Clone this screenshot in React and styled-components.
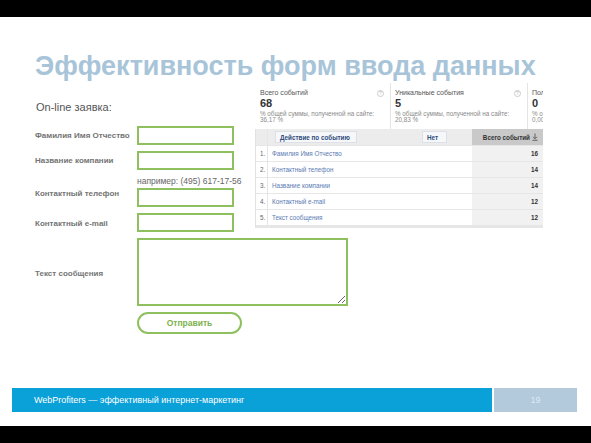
import React from "react";
import styled, { createGlobalStyle } from "styled-components";

const Global = createGlobalStyle`
  html, body { margin: 0; padding: 0; background: #000; }
  body { width: 591px; height: 443px; overflow: hidden; }
  * { box-sizing: border-box; }
`;

const Slide = styled.div`
  margin-top: 17px;
  height: 409px;
  background: #fff;
  display: flex;
  flex-direction: column;
`;

const Title = styled.h1`
  margin: 0;
  padding: 35px 0 0 35px;
  font: bold 27px/28px "Liberation Sans", Arial, sans-serif;
  color: #a8c4d8;
  white-space: nowrap;
`;

const Body = styled.div`
  display: flex;
  align-items: flex-start;
  margin-top: 3px;
  padding-left: 35px;
`;

const FormColumn = styled.div`
  width: 219px;
  flex: none;
`;

const FormHeading = styled.div`
  margin: 17px 0 12px 1px;
  font: 11px/14px "Liberation Sans", Arial, sans-serif;
  color: #555;
`;

const FormGrid = styled.div`
  display: grid;
  grid-template-columns: 102px 97px;
  row-gap: 6px;
  align-items: center;
`;

const Label = styled.div`
  font: bold 8px/10px "Liberation Sans", Arial, sans-serif;
  color: #747474;
  white-space: nowrap;
  margin-top: ${(p) => p.$shift || 0}px;
`;

const FieldStack = styled.div`
  display: flex;
  flex-direction: column;
  gap: 2px;
`;

const Hint = styled.div`
  font: 8.5px/10px "Liberation Sans", Arial, sans-serif;
  color: #666;
  white-space: nowrap;
`;

const Input = styled.input`
  display: block;
  width: 97px;
  height: 19px;
  margin: 0;
  border: 2px solid #8fc060;
  background: #fff;
  outline: none;
`;

const TextArea = styled.textarea`
  display: block;
  width: 211px;
  height: 68px;
  margin: 0;
  border: 2px solid #8fc060;
  background: #fff;
  outline: none;
  justify-self: start;
`;

const SubmitButton = styled.button`
  width: 105px;
  height: 22px;
  border: 2px solid #8fc060;
  border-radius: 11px;
  background: #fff;
  color: #7db24f;
  font: bold 8.5px "Liberation Sans", Arial, sans-serif;
  padding: 0;
`;

const Panel = styled.div`
  width: 289px;
  height: 145px;
  overflow: hidden;
  flex: none;
  font-family: "Liberation Sans", Arial, sans-serif;
`;

const Metrics = styled.div`
  display: flex;
  height: 46px;
`;

const Metric = styled.div`
  position: relative;
  width: ${(p) => (p.$last ? "auto" : "137px")};
  flex: ${(p) => (p.$last ? "1" : "none")};
  min-width: 0;
  padding: 6px 0 0 ${(p) => (p.$first ? 6 : 4)}px;
  border-right: ${(p) => (p.$last ? "none" : "1px solid #e4e4e4")};
  white-space: nowrap;
  overflow: hidden;
`;

const MetricLabel = styled.div`
  font-size: 7px;
  line-height: 8px;
  color: #555;
`;

const MetricValue = styled.div`
  font-size: 11px;
  line-height: 12px;
  font-weight: bold;
  color: #333;
`;

const MetricNote = styled.div`
  margin-top: ${(p) => (p.$first ? 2 : 0)}px;
  font-size: 6.3px;
  line-height: 6px;
  color: #8a8a8a;
`;

const Help = styled.span`
  position: absolute;
  top: 7px;
  right: 6px;
  width: 7px;
  height: 7px;
  border: 1px solid #ccc;
  border-radius: 50%;
  font-size: 5px;
  line-height: 5px;
  text-align: center;
  color: #bbb;
`;

const Table = styled.div`
  margin-left: 1px;
  border-left: 1px solid #e2e2e2;
  border-bottom: 2px solid #e6e6e6;
`;

const Row = styled.div`
  display: grid;
  grid-template-columns: 12px 1fr 71px;
  height: ${(p) => (p.$head ? 17 : 16)}px;
  background: ${(p) => (p.$head ? "#ececec" : "#fff")};
  border-bottom: 1px solid #e6e6e6;
  font-size: 6.3px;
`;

const NumCell = styled.div`
  display: flex;
  align-items: center;
  padding-left: 4px;
  border-right: 1px solid #e6e6e6;
  color: #666;
`;

const NameCell = styled.div`
  display: flex;
  align-items: center;
  padding-left: ${(p) => (p.$head ? 7 : 4)}px;
  color: #5a7bb3;
`;

const ValueCell = styled.div`
  display: flex;
  align-items: center;
  justify-content: flex-end;
  gap: 2px;
  padding-right: 5px;
  background: ${(p) => (p.$head ? "#c9c9c9" : "#f1f1f1")};
  font-weight: bold;
  color: #333;
`;

const HeadChip = styled.div`
  display: flex;
  align-items: center;
  gap: 4px;
  height: 12px;
  width: ${(p) => p.$w}px;
  margin-left: ${(p) => p.$ml || 0}px;
  padding: 0 4px;
  background: #f6f7f9;
  border: 1px solid #dde0e6;
  font-weight: bold;
  color: #2f4c7e;
  white-space: nowrap;
`;

const SortIcon = () => (
  <svg width="7" height="7" viewBox="0 0 8 8">
    <circle cx="4" cy="4" r="3.4" fill="none" stroke="#b7bfcc" strokeWidth="0.8" />
    <path d="M2.6 3.4 L4 2 L5.4 3.4 M2.6 4.6 L4 6 L5.4 4.6" fill="none" stroke="#b7bfcc" strokeWidth="0.7" />
  </svg>
);

const DownIcon = () => (
  <svg width="6" height="8" viewBox="0 0 6 8">
    <path d="M3 0.5 V5.5 M1 3.8 L3 5.8 L5 3.8 M0.5 7.3 H5.5" fill="none" stroke="#555" strokeWidth="0.9" />
  </svg>
);

const FooterBar = styled.div`
  display: flex;
  gap: 2px;
  height: 24px;
  margin: auto 14px 14px 12px;
  font: 9px "Liberation Sans", Arial, sans-serif;
`;

const FooterText = styled.div`
  flex: 1;
  display: flex;
  align-items: center;
  padding-left: 22px;
  background: #0aa0d8;
  color: #fff;
`;

const PageNum = styled.div`
  width: 83px;
  display: flex;
  align-items: center;
  justify-content: center;
  background: #b3c9dc;
  color: #dfeaf3;
`;

const metrics = [
  { label: "Всего событий", value: "68", note: "% общей суммы, полученной на сайте:", pct: "36,17 %", help: true },
  { label: "Уникальные события", value: "5", note: "% общей суммы, полученной на сайте:", pct: "20,83 %", help: true },
  { label: "Пол", value: "0", note: "% о", pct: "0,00", help: false },
];

const rows = [
  ["1.", "Фамилия Имя Отчество", "16"],
  ["2.", "Контактный телефон", "14"],
  ["3.", "Название компании", "14"],
  ["4.", "Контактный e-mail", "12"],
  ["5.", "Текст сообщения", "12"],
];

export default function App() {
  return (
    <>
      <Global />
      <Slide>
        <Title>Эффективность форм ввода данных</Title>
        <Body>
          <FormColumn>
            <FormHeading>On-line заявка:</FormHeading>
            <FormGrid>
              <Label>Фамилия Имя Отчество</Label>
              <Input />
              <Label>Название компании</Label>
              <Input />
              <Label $shift={4}>Контактный телефон</Label>
              <FieldStack>
                <Hint>например: (495) 617-17-56</Hint>
                <Input />
              </FieldStack>
              <Label $shift={2}>Контактный e-mail</Label>
              <Input />
              <Label $shift={4}>Текст сообщения</Label>
              <TextArea />
              <span />
              <SubmitButton>Отправить</SubmitButton>
            </FormGrid>
          </FormColumn>
          <Panel>
            <Metrics>
              {metrics.map((m, i) => (
                <Metric key={m.label} $first={i === 0} $last={i === metrics.length - 1}>
                  <MetricLabel>{m.label}</MetricLabel>
                  <MetricValue>{m.value}</MetricValue>
                  <MetricNote $first>{m.note}</MetricNote>
                  <MetricNote>{m.pct}</MetricNote>
                  {m.help && <Help>?</Help>}
                </Metric>
              ))}
            </Metrics>
            <Table>
              <Row $head>
                <NumCell />
                <NameCell $head>
                  <HeadChip $w={82}>
                    Действие по событию <SortIcon />
                  </HeadChip>
                  <HeadChip $w={25} $ml={65}>
                    Нет <SortIcon />
                  </HeadChip>
                </NameCell>
                <ValueCell $head>
                  Всего событий <DownIcon />
                </ValueCell>
              </Row>
              {rows.map(([n, name, v]) => (
                <Row key={n}>
                  <NumCell>{n}</NumCell>
                  <NameCell>{name}</NameCell>
                  <ValueCell>{v}</ValueCell>
                </Row>
              ))}
            </Table>
          </Panel>
        </Body>
        <FooterBar>
          <FooterText>WebProfiters — эффективный интернет-маркетинг</FooterText>
          <PageNum>19</PageNum>
        </FooterBar>
      </Slide>
    </>
  );
}
